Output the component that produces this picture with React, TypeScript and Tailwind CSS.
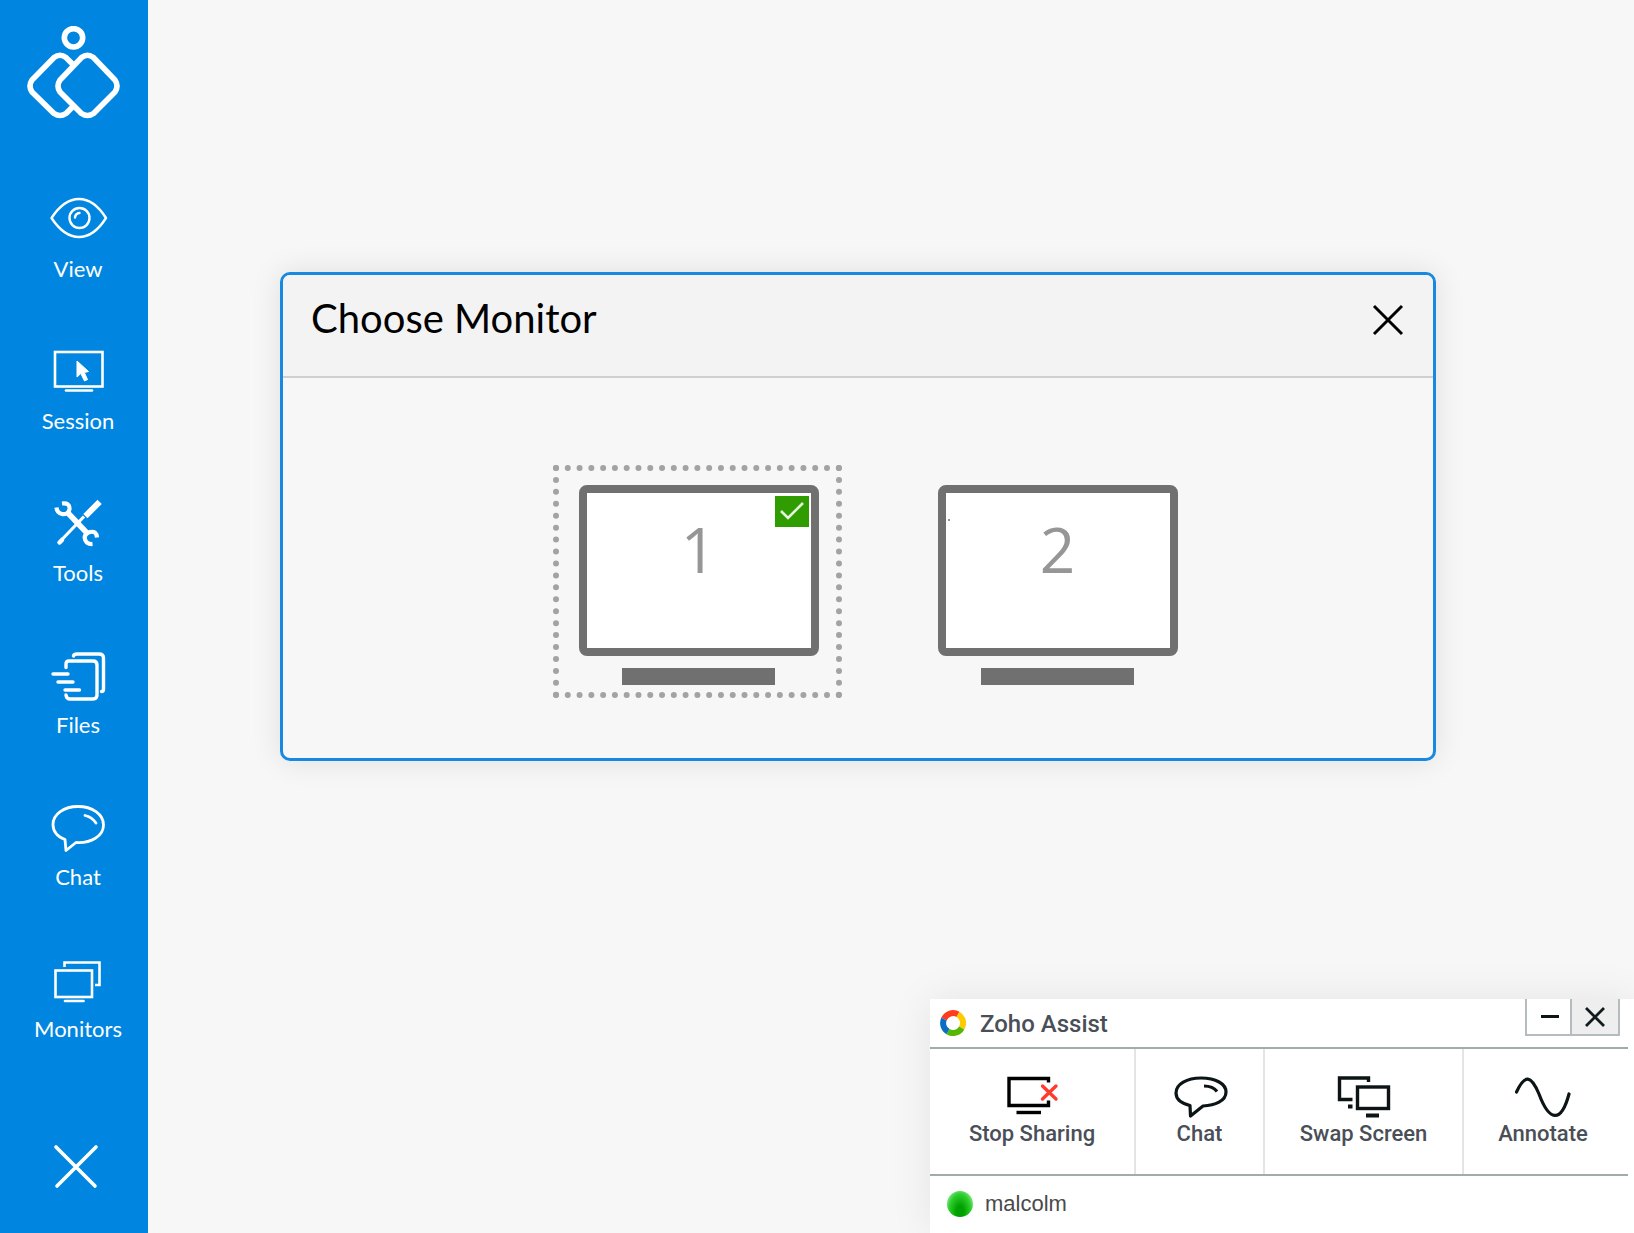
import React, { useState } from 'react'

interface NavItem {
  label: string
  icon: React.ReactNode
}

const Logo: React.FC = () => (
  <svg width="94" height="94" viewBox="27 26 94 94" fill="none" stroke="#fff" strokeWidth="5.6" aria-hidden="true">
    <circle cx="73.5" cy="37.8" r="9.2" />
    <path d="M73 64.5 L66 57.5 Q60 53 54 57.5 L32 80 Q28 86 32 92 L54 113.5 Q60 117.5 66 113.5 L73 106.5" />
    <path d="M81.5 57.5 Q87.5 53 93.500 57.5 L115 80 Q119 86 115 92 L93.5 113.5 Q87.5 117.5 81.5 113.5 L60 92 Q56 86 60 80 Z" />
  </svg>
)

const EyeIcon: React.FC = () => (
  <svg width="60" height="56" viewBox="48 190 60 56" fill="none" stroke="#fff" strokeWidth="2.4" aria-hidden="true">
    <path d="M51.5 218 Q64 199 79 199 Q94 199 106 218 Q94 237 79 237 Q64 237 51.5 218 Z" strokeLinejoin="round" />
    <circle cx="79.5" cy="218" r="10" />
    <path d="M75 217.5 Q75.5 213.5 79.5 213" strokeLinecap="round" />
  </svg>
)

const SessionIcon: React.FC = () => (
  <svg width="60" height="56" viewBox="48 342 60 56" fill="none" stroke="#fff" strokeWidth="2.6" aria-hidden="true">
    <rect x="55" y="352" width="47.5" height="34.5" />
    <path d="M66 390.5 H92" strokeWidth="2.6" strokeLinecap="round" />
    <path d="M77 361 V377 L80.8 373.5 L84.5 381 L87.5 379.5 L84.3 372.5 L88.5 371.5 Z" fill="#fff" strokeWidth="1" />
  </svg>
)

const ToolsIcon: React.FC = () => (
  <svg width="60" height="56" viewBox="48 494 60 56" fill="none" stroke="#fff" aria-hidden="true">
    <path d="M67 512 L87 533" strokeWidth="5.5" />
    <path d="M62 503.5 Q70 502.5 69.5 509 Q68.5 515 62 514 Q57 513 56.5 507.5" strokeWidth="4.2" />
    <path d="M97 537.5 Q96.5 530.5 90 532 Q83.5 534 85 539.5 Q87 544.5 92.5 544" strokeWidth="4.2" />
    <path d="M61 540.5 L84 516.5" strokeWidth="3.2" />
    <path d="M59.5 542.5 L62 540" strokeWidth="4.5" strokeLinecap="round" />
    <path d="M87.5 514 L97.5 504" strokeWidth="6" strokeLinejoin="round" strokeLinecap="square" />
  </svg>
)

const FilesIcon: React.FC = () => (
  <svg width="60" height="56" viewBox="48 646 60 56" fill="none" stroke="#fff" strokeWidth="3.4" strokeLinecap="round" aria-hidden="true">
    <path d="M66 667.5 V664 Q66 661 69 661 H93 Q97 661 97 665 V695 Q97 699 93 699 H70 Q66.5 699 66 695" />
    <path d="M73.5 656 Q74 654 77 654 H99 Q103.5 654 103.5 658 V689 Q103.5 691.5 101.5 691.5" />
    <path d="M53 674 H68 M58 682 H73 M65 690 H79.5" />
  </svg>
)

const BubbleIcon: React.FC = () => (
  <svg width="60" height="56" viewBox="48 797 60 56" fill="none" stroke="#fff" strokeWidth="2.8" aria-hidden="true">
    <path d="M65 838.5 C56 835 53 829 53 823.5 C53 813 64 805.5 78 805.5 C92 805.5 103.5 813 103.5 824 C103.5 835 91 842.5 76 841.5 L66 849.5 Z" strokeLinejoin="round" />
    <path d="M85 814.5 Q92 816 96 822" strokeLinecap="round" />
  </svg>
)

const MonitorsIcon: React.FC = () => (
  <svg width="60" height="56" viewBox="48 950 60 56" fill="none" stroke="#fff" strokeWidth="2.6" aria-hidden="true">
    <rect x="55.5" y="970.5" width="36.5" height="26.5" />
    <path d="M64.5 967 V962.5 H99.5 V985 H95" />
    <path d="M65 1001 H83.5" strokeLinecap="round" />
  </svg>
)

const StopSharingIcon: React.FC = () => (
  <svg width="54" height="42" viewBox="1005 1076 54 42" fill="none" stroke="#000" strokeWidth="3.4" aria-hidden="true">
    <path d="M1048.5 1082.5 V1078.5 H1009 V1105.5 H1048.5 V1100.5" />
    <path d="M1016.5 1112.5 H1041" />
    <path d="M1042.5 1086 L1056 1099 M1056 1086 L1042.5 1099" stroke="#ff3b30" strokeLinecap="round" />
  </svg>
)

const ChatIcon: React.FC = () => (
  <svg width="56" height="42" viewBox="1173 1076 56 42" fill="none" stroke="#0c1416" strokeWidth="3.2" aria-hidden="true">
    <path d="M1191 1105.5 C1181 1103 1177 1098 1177 1093 C1177 1084 1188 1078 1202 1078 C1217 1078 1227 1084 1227 1092 C1227 1101 1216 1105.5 1204 1106 L1191.5 1116 Z" strokeLinejoin="round" />
    <path d="M1205 1086 Q1214 1086 1218 1091.5" />
  </svg>
)

const SwapIcon: React.FC = () => (
  <svg width="54" height="42" viewBox="1337 1075 54 42" fill="none" stroke="#0c1416" strokeWidth="3.4" aria-hidden="true">
    <rect x="1357.5" y="1086" width="31" height="21.5" />
    <path d="M1368.5 1081 V1077 H1339.5 V1098.5 H1352.5" />
    <path d="M1348 1105.5 H1352.5 M1366 1114.5 H1379" strokeWidth="3.8" />
  </svg>
)

const AnnotateIcon: React.FC = () => (
  <svg width="56" height="42" viewBox="1517 1075 56 42" fill="none" stroke="#0c1416" strokeWidth="3.2" strokeLinecap="round" aria-hidden="true">
    <path d="M1518.5 1091 C1527 1073 1533 1074 1541 1093 C1551 1120 1563 1123 1571 1093" />
  </svg>
)

const ZohoIcon: React.FC = () => (
  <svg width="26" height="26" viewBox="0 0 26 26" fill="none" strokeWidth="6" aria-hidden="true">
    <path d="M4 9 A10 10 0 0 1 18 4.3" stroke="#ff3b1f" />
    <path d="M18 4.3 A10 10 0 0 1 21.7 18" stroke="#fdcb00" />
    <path d="M21.7 18 A10 10 0 0 1 8 21.7" stroke="#55b800" />
    <path d="M8 21.7 A10 10 0 0 1 4 9" stroke="#0a6fc2" />
  </svg>
)

const navItems: NavItem[] = [
  { label: 'View', icon: <EyeIcon /> },
  { label: 'Session', icon: <SessionIcon /> },
  { label: 'Tools', icon: <ToolsIcon /> },
  { label: 'Files', icon: <FilesIcon /> },
  { label: 'Chat', icon: <BubbleIcon /> },
  { label: 'Monitors', icon: <MonitorsIcon /> },
]

const Sidebar: React.FC = () => (
  <aside className="flex w-[148px] shrink-0 flex-col bg-[#0086e0] pt-[26px] text-white">
    <div className="flex h-[164px] justify-center">
      <Logo />
    </div>
    <nav className="flex flex-col gap-[58px] pl-2">
      {navItems.map((item) => (
        <button key={item.label} type="button" className="flex flex-col items-center gap-2 text-[22px] leading-[30px]">
          {item.icon}
          {item.label}
        </button>
      ))}
    </nav>
    <button type="button" aria-label="Close session" className="mt-[100px] flex justify-center pl-1">
      <svg width="46" height="46" viewBox="0 0 46 46" fill="none" stroke="#fff" strokeWidth="3.6" strokeLinecap="round">
        <path d="M3 3 L42 42 M43 3 L4 42" />
      </svg>
    </button>
  </aside>
)

interface MonitorProps {
  id: number
  selected: boolean
  onSelect: (id: number) => void
}

const Monitor: React.FC<MonitorProps> = ({ id, selected, onSelect }) => (
  <button
    type="button"
    aria-pressed={selected}
    onClick={() => onSelect(id)}
    className={`flex flex-col items-center border-[6px] border-dotted pt-[14px] pr-[17px] pb-[7px] pl-5 ${
      selected ? 'border-[#a3a3a3]' : 'border-transparent'
    }`}
  >
    <span className="relative flex h-[171px] w-[240px] justify-center rounded-lg border-8 border-[#707070] bg-white pt-[18px] font-['Open_Sans','Noto_Sans',sans-serif] text-[62px] leading-[76px] text-[#969696]">
      {id}
      {selected && (
        <span className="absolute top-[3px] right-[2px] flex h-[31px] w-[34px] items-center justify-center bg-[#2f9c00]">
          <svg width="24" height="20" viewBox="0 0 24 20" fill="none" stroke="#e4f5dc" strokeWidth="2.6">
            <path d="M1 9 L8 16 L23 1" />
          </svg>
        </span>
      )}
      {id === 2 && <span className="absolute top-[26px] left-[2px] size-[2px] bg-[#999]" />}
    </span>
    <span className="mt-3 h-[17px] w-[153px] bg-[#707070]" />
  </button>
)

const ChooseMonitorDialog: React.FC = () => {
  const [selected, setSelected] = useState(1)

  return (
    <section
      role="dialog"
      aria-labelledby="dialog-title"
      className="overflow-hidden rounded-[10px] border-[3px] border-[#1789e0] bg-[#f7f7f7] shadow-[0_0_30px_rgba(0,0,0,0.1)]"
    >
      <header className="flex h-[103px] items-center justify-between border-b-2 border-[#cfcfcf] bg-[#f3f3f3] px-7 pb-[11px]">
        <h1 id="dialog-title" className="pb-1 text-[40px] leading-[48px] text-black">
          Choose Monitor
        </h1>
        <button type="button" aria-label="Close">
          <svg width="34" height="34" viewBox="0 0 34 34" fill="none" stroke="#000" strokeWidth="3">
            <path d="M3 3 L31 31 M31 3 L3 31" />
          </svg>
        </button>
      </header>
      <div className="flex justify-center gap-[70px] pt-[87px] pb-[60px] pl-[37px]">
        <Monitor id={1} selected={selected === 1} onSelect={setSelected} />
        <Monitor id={2} selected={selected === 2} onSelect={setSelected} />
      </div>
    </section>
  )
}

const toolClass =
  'flex flex-col items-center gap-[2px] border-[#e4e4e4] pt-[27px] text-[22px] leading-7 font-medium text-[#4a4f57]'

const AssistWidget: React.FC = () => (
  <section className="w-[704px] bg-white pr-[6px] font-['Roboto',sans-serif] shadow-[0_0_40px_rgba(0,0,0,0.08)]">
    <header className="flex h-[50px] items-start border-b-2 border-[#a3abab] pr-2 pl-[10px]">
      <div className="flex h-12 flex-1 items-center gap-[14px]">
        <ZohoIcon />
        <h2 className="pt-[2px] text-2xl font-medium text-[#4a4f57]">Zoho Assist</h2>
      </div>
      <div className="flex h-[37px] border-x-2 border-b-2 border-[#b5bcc0]">
        <button type="button" aria-label="Minimize" className="flex w-[43px] items-center justify-center pl-[2px]">
          <span className="h-[3px] w-[18px] bg-[#0c1416]" />
        </button>
        <button type="button" aria-label="Close" className="flex w-12 items-center justify-center border-l-2 border-[#b5bcc0] bg-[#eee]">
          <svg width="20" height="20" viewBox="0 0 20 20" fill="none" stroke="#111a1c" strokeWidth="2.8">
            <path d="M1 1 L19 19 M19 1 L1 19" />
          </svg>
        </button>
      </div>
    </header>
    <div className="flex h-[127px] items-stretch border-b-2 border-[#a3abab]">
      <button type="button" className={`${toolClass} w-[206px] border-r-2`}>
        <StopSharingIcon />
        Stop Sharing
      </button>
      <button type="button" className={`${toolClass} w-[129px] border-r-2`}>
        <ChatIcon />
        Chat
      </button>
      <button type="button" className={`${toolClass} w-[199px] border-r-2`}>
        <SwapIcon />
        Swap Screen
      </button>
      <button type="button" className={`${toolClass} flex-1 pr-[6px]`}>
        <AnnotateIcon />
        Annotate
      </button>
    </div>
    <footer className="flex h-[57px] items-center gap-3 pb-[2px] pl-[17px] text-[#4a4a4a]">
      <span className="size-[26px] rounded-full bg-radial-[at_50%_80%] from-[#00a000] from-20% via-[#2fcf2f] via-60% to-[#d2f8d2]" />
      <span className="font-['Liberation_Sans',Arial,sans-serif] text-[22px]">malcolm</span>
    </footer>
  </section>
)

const App: React.FC = () => (
  <div className="flex min-h-screen bg-[#f7f7f7] font-['Lato',sans-serif]">
    <Sidebar />
    <main className="flex min-w-0 flex-1 flex-col justify-between pt-[272px]">
      <div className="pr-[198px] pl-[132px]">
        <ChooseMonitorDialog />
      </div>
      <div className="flex justify-end overflow-hidden pt-12 pl-12">
        <AssistWidget />
      </div>
    </main>
  </div>
)

export default App
